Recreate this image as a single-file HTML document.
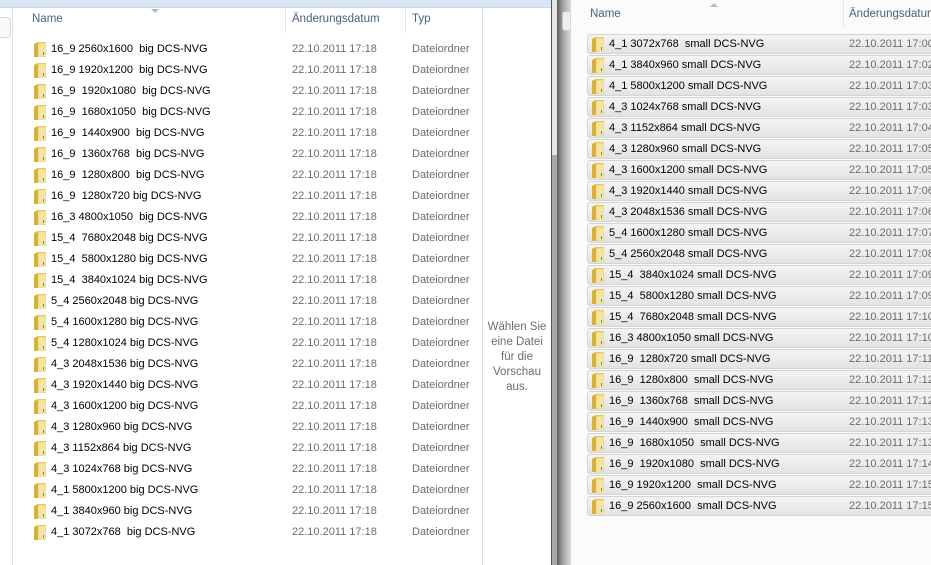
<!DOCTYPE html>
<html><head><meta charset="utf-8"><style>
*{margin:0;padding:0;box-sizing:border-box}
body{width:931px;height:565px;overflow:hidden;background:#fff;font-family:"Liberation Sans",sans-serif;font-size:11px;position:relative}
.a{position:absolute;white-space:pre}
.n{color:#000}
.d{color:#6d6d6d}
.h{color:#4c607a;font-size:11.5px}
.ic{position:absolute;width:14px;height:17px}
.rb{position:absolute;left:587px;width:360px;height:20px;border:1px solid #d4d4d4;border-radius:3px;background:linear-gradient(#f4f4f4,#e3e3e3)}
</style></head><body>
<div class="a" style="left:0;top:0;width:552px;height:8px;background:#dbe6f4;border-bottom:1px solid #c9d6e6"></div>
<div class="a" style="left:0;top:17px;width:11px;height:21px;border:1px solid #d8d8d8;border-left:none;border-radius:0 4px 4px 0;background:#fafafa"></div>
<div class="a" style="left:12px;top:8px;width:1px;height:557px;background:#d5e3f1"></div>
<div class="a" style="left:482px;top:8px;width:1px;height:557px;background:#d5e3f1"></div>
<div class="a" style="left:285px;top:8px;width:1px;height:25px;background:#e3e8ee"></div>
<div class="a" style="left:405px;top:8px;width:1px;height:25px;background:#e3e8ee"></div>
<div class="a" style="left:151px;top:9px;width:0;height:0;border-left:4px solid transparent;border-right:4px solid transparent;border-top:4px solid #a9bcd3"></div>
<div class="a h" style="left:32px;top:13px">Name</div>
<div class="a h" style="left:292px;top:13px">Änderungsdatum</div>
<div class="a h" style="left:412px;top:13px">Typ</div>
<div class="a d" style="left:483px;top:320px;width:68px;text-align:center;line-height:15px;font-size:11.5px;white-space:normal">Wählen Sie eine Datei für die Vorschau aus.</div>
<div class="a" style="left:551px;top:0;width:1px;height:565px;background:#555"></div>
<div class="a" style="left:552px;top:0;width:5px;height:155px;background:#e6e6e6"></div>
<div class="a" style="left:552px;top:155px;width:5px;height:410px;background:#a8a8a8"></div>
<div class="a" style="left:557px;top:0;width:13px;height:565px;background:linear-gradient(90deg,#606060,#9a9a9a 40%,#d8d8d8)"></div>
<div class="a" style="left:570px;top:0;width:1px;height:565px;background:#cfd9e4"></div>
<div class="a" style="left:571px;top:0;width:360px;height:565px;background:#fbfbfb"></div>
<div class="a" style="left:562px;top:11px;width:8px;height:20px;border:1px solid #c8c8c8;border-right:none;border-radius:3px 0 0 3px;background:#eee"></div>
<div class="a" style="left:843px;top:0;width:1px;height:28px;background:#e3e8ee"></div>
<div class="a" style="left:710px;top:3px;width:0;height:0;border-left:4px solid transparent;border-right:4px solid transparent;border-bottom:4px solid #a9bcd3"></div>
<div class="a h" style="left:590px;top:8px">Name</div>
<div class="a h" style="left:849px;top:8px">Änderungsdatum</div>
<div id="L"></div><div id="R"></div>
<script>
var fold='<svg viewBox="0 0 14 17" width="14" height="17"><path d="M1 3 L5 1 L13 1 L13 16 L1 16 Z" fill="#e8c85a"/><path d="M1 3 L5 1 L5 16 L1 16Z" fill="#d7b043"/><path d="M5 2 L13 2 L13 16 L5 16Z" fill="#f3dc85"/><path d="M6 3 L12 3 L12 15 L6 15Z" fill="#f7e59f"/><rect x="10" y="11" width="1" height="3" fill="#3a8fd8"/></svg>';
var L=["16_9 2560x1600  big DCS-NVG","16_9 1920x1200  big DCS-NVG","16_9  1920x1080  big DCS-NVG","16_9  1680x1050  big DCS-NVG","16_9  1440x900  big DCS-NVG","16_9  1360x768  big DCS-NVG","16_9  1280x800  big DCS-NVG","16_9  1280x720 big DCS-NVG","16_3 4800x1050  big DCS-NVG","15_4  7680x2048 big DCS-NVG","15_4  5800x1280 big DCS-NVG","15_4  3840x1024 big DCS-NVG","5_4 2560x2048 big DCS-NVG","5_4 1600x1280 big DCS-NVG","5_4 1280x1024 big DCS-NVG","4_3 2048x1536 big DCS-NVG","4_3 1920x1440 big DCS-NVG","4_3 1600x1200 big DCS-NVG","4_3 1280x960 big DCS-NVG","4_3 1152x864 big DCS-NVG","4_3 1024x768 big DCS-NVG","4_1 5800x1200 big DCS-NVG","4_1 3840x960 big DCS-NVG","4_1 3072x768  big DCS-NVG"];
var R=[["4_1 3072x768  small DCS-NVG","17:00"],["4_1 3840x960 small DCS-NVG","17:02"],["4_1 5800x1200 small DCS-NVG","17:03"],["4_3 1024x768 small DCS-NVG","17:03"],["4_3 1152x864 small DCS-NVG","17:04"],["4_3 1280x960 small DCS-NVG","17:05"],["4_3 1600x1200 small DCS-NVG","17:05"],["4_3 1920x1440 small DCS-NVG","17:06"],["4_3 2048x1536 small DCS-NVG","17:06"],["5_4 1600x1280 small DCS-NVG","17:07"],["5_4 2560x2048 small DCS-NVG","17:08"],["15_4  3840x1024 small DCS-NVG","17:09"],["15_4  5800x1280 small DCS-NVG","17:09"],["15_4  7680x2048 small DCS-NVG","17:10"],["16_3 4800x1050 small DCS-NVG","17:10"],["16_9  1280x720 small DCS-NVG","17:11"],["16_9  1280x800  small DCS-NVG","17:12"],["16_9  1360x768  small DCS-NVG","17:12"],["16_9  1440x900  small DCS-NVG","17:13"],["16_9  1680x1050  small DCS-NVG","17:13"],["16_9  1920x1080  small DCS-NVG","17:14"],["16_9 1920x1200  small DCS-NVG","17:15"],["16_9 2560x1600  small DCS-NVG","17:15"]];
var h='';
L.forEach(function(t,i){var y=41+i*21;
h+='<div class="ic" style="left:33px;top:'+y+'px">'+fold+'</div><div class="a n" style="left:51px;top:'+(y+2)+'px">'+t+'</div><div class="a d" style="left:292px;top:'+(y+2)+'px">22.10.2011 17:18</div><div class="a d" style="left:412px;top:'+(y+2)+'px">Dateiordner</div>';});
document.getElementById('L').innerHTML=h;h='';
R.forEach(function(r,i){var y=34+i*21;
h+='<div class="rb" style="top:'+y+'px"></div><div class="ic" style="left:591px;top:'+(y+2)+'px">'+fold+'</div><div class="a n" style="left:609px;top:'+(y+4)+'px">'+r[0]+'</div><div class="a d" style="left:849px;top:'+(y+4)+'px">22.10.2011 '+r[1]+'</div>';});
document.getElementById('R').innerHTML=h;
</script>
</body></html>
